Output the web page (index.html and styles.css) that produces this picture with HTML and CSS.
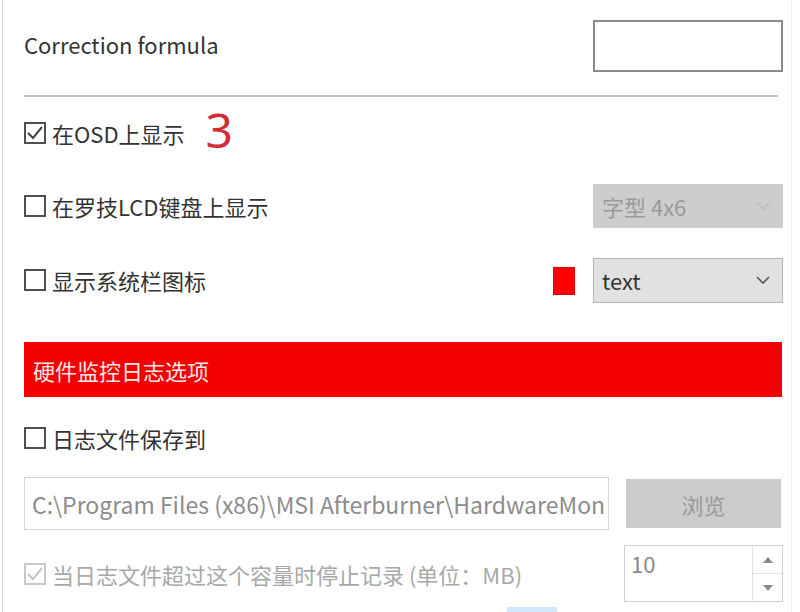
FILE: index.html
```html
<!doctype html>
<html lang="zh-CN">
<head>
<meta charset="utf-8">
<title>监控 - 设置</title>
<link rel="stylesheet" href="styles.css">
</head>
<body>

	<div class="panel">

		<div class="row rowFormula">
			<span class="label">Correction formula</span>
			<input type="text" class="formula">
		</div>

		<div class="sep"></div>

		<div class="row rowCheck rowOsd">
			<label class="check">
				<span class="box"><svg viewBox="0 0 22 22" width="22" height="22"><polyline points="4,11 9,16 18,5" fill="none" stroke="#444" stroke-width="2"/></svg></span>
				<span class="label">在OSD上显示</span>
			</label>
			<span class="mark">3</span>
		</div>

		<div class="row rowCheck rowLcd">
			<label class="check">
				<span class="box"></span>
				<span class="label">在罗技LCD键盘上显示</span>
			</label>
			<div class="select disabled">
				<span>字型 4x6</span>
				<svg viewBox="0 0 16 10" width="16" height="10"><polyline points="2,2 8,8 14,2" fill="none" stroke="#bdbdbd" stroke-width="1.6"/></svg>
			</div>
		</div>

		<div class="row rowCheck rowTray">
			<label class="check">
				<span class="box"></span>
				<span class="label">显示系统栏图标</span>
			</label>
			<span class="swatch"></span>
			<div class="select">
				<span>text</span>
				<svg viewBox="0 0 16 10" width="16" height="10"><polyline points="2,2 8,8 14,2" fill="none" stroke="#555" stroke-width="1.6"/></svg>
			</div>
		</div>

		<div class="sectionBar">硬件监控日志选项</div>

		<div class="row rowCheck rowSave">
			<label class="check">
				<span class="box"></span>
				<span class="label">日志文件保存到</span>
			</label>
		</div>

		<div class="row rowPath">
			<div class="path">C:\Program Files (x86)\MSI Afterburner\HardwareMon</div>
			<button class="browse" disabled>浏览</button>
		</div>

		<div class="row rowCheck rowLimit">
			<label class="check dim">
				<span class="box"><svg viewBox="0 0 22 22" width="22" height="22"><polyline points="4,11 9,16 18,5" fill="none" stroke="#c4c4c4" stroke-width="2"/></svg></span>
				<span class="label">当日志文件超过这个容量时停止记录 (单位：MB)</span>
			</label>
			<div class="spin">
				<span class="spinValue">10</span>
				<div class="spinArrows">
					<span class="arrow"><svg viewBox="0 0 10 6" width="10" height="6"><polygon points="5,0 10,6 0,6" fill="#888"/></svg></span>
					<span class="arrow"><svg viewBox="0 0 10 6" width="10" height="6"><polygon points="0,0 10,0 5,6" fill="#888"/></svg></span>
				</div>
			</div>
		</div>

		<div class="tail"><span class="tailButton"></span></div>

	</div>

</body>
</html>
```

FILE: styles.css
```css
	body { margin: 0; background: #fff; color: #333; font: 22px "Noto Sans CJK SC", "Noto Sans", sans-serif; overflow: hidden; }

	.panel { margin-left: 2px; width: 790px; padding: 20px 8px 0 21px; border-left: 1px solid #d8d8d8; border-right: 1px solid #f0f0f0; height: 612px; box-sizing: border-box; }

	.row { display: flex; align-items: center; }
	.label { white-space: nowrap; line-height: 1; }

	.rowFormula { height: 52px; justify-content: space-between; }
	.rowFormula .label { margin-top: -5px; }
	.formula { width: 190px; height: 52px; box-sizing: border-box; border: 2px solid #8a8a8a; margin: 0; padding: 0; background: #fff; }

	.sep { height: 2px; background: #c4c4c4; margin: 23px 5px 0 0; }

	.rowCheck { height: 44px; }
	.rowOsd { margin-top: 14px; }
	.rowLcd { margin-top: 29px; justify-content: space-between; }
	.rowTray { margin-top: 30px; }
	.rowSave { margin-top: 19px; }
	.rowLimit { margin-top: 15px; height: 57px; justify-content: space-between; }

	.check { display: flex; align-items: center; gap: 6px; }
	.box { width: 22px; height: 22px; box-sizing: border-box; border: 2px solid #505050; background: #fff; display: flex; align-items: center; justify-content: center; }
	.box svg { flex: none; margin: -2px; }
	.check.dim .box { border-color: #c8c8c8; }
	.check.dim .label { color: #a8a8a8; }

	.mark { color: #d42b36; font: 48px "Noto Sans", sans-serif; line-height: 1; margin-left: 21px; margin-top: -6px; }

	.select { width: 190px; height: 44px; box-sizing: border-box; display: flex; align-items: center; justify-content: space-between; padding: 0 11px 0 8px; background: #e1e1e1; border: 1px solid #b4b4b4; color: #333; }
	.select.disabled { background: #cdcdcd; border-color: #cdcdcd; color: #9a9a9a; }
	.rowTray .select { height: 45px; }

	.swatch { width: 22px; height: 28px; background: #f00; border: 1px solid #d00; box-sizing: border-box; margin: 2px 18px 0 auto; }

	.sectionBar { margin-top: 40px; height: 55px; width: 758px; background: #f40000; color: #ffe6e6; display: flex; align-items: center; padding-left: 9px; box-sizing: border-box; }

	.rowPath { margin-top: 17px; height: 53px; }
	.path { width: 585px; height: 53px; box-sizing: border-box; border: 1px solid #d6d6d6; color: #8c8c8c; padding-left: 7px; display: flex; align-items: center; white-space: nowrap; overflow: hidden; font-size: 23px; }
	.browse { margin-left: 17px; width: 155px; height: 49px; border: none; background: #cccccc; color: #9a9a9a; font: inherit; padding: 0; }

	.spin { width: 159px; height: 57px; box-sizing: border-box; border: 1px solid #cfcfcf; display: flex; }
	.spinValue { flex: 1; color: #8a8a8a; padding: 6px 0 0 6px; line-height: 1; }
	.spinArrows { width: 29px; border-left: 1px solid #e2e2e2; display: flex; flex-direction: column; }
	.arrow { flex: 1; display: flex; align-items: center; justify-content: center; }
	.arrow + .arrow { border-top: 1px solid #e2e2e2; }

	.tail { margin-top: 5px; padding-left: 483px; }
	.tailButton { display: block; width: 50px; height: 10px; background: #d2e7fa; }
```
